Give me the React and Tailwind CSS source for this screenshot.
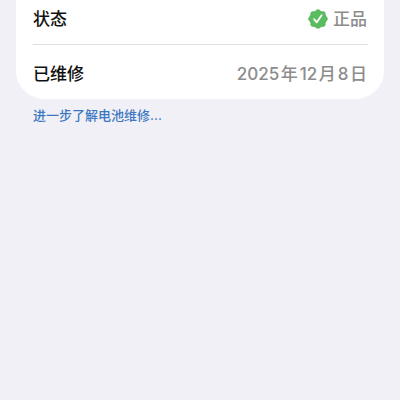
import { Fragment } from 'react'

const ROWS = [
  { label: '状态', value: ['正品'], verified: true },
  { label: '已维修', value: ['2025', '年', '12', '月', '8', '日'] },
]

// ── Green scalloped seal with a check mark ──────────────────────────────────
const VerifiedBadge = () => (
  <svg className="h-5 w-5" viewBox="0 0 20 20" fill="none">
    <g fill="#5bbb60">
      <circle cx="10" cy="10" r="8.7" />
      {[0, 45, 90, 135, 180, 225, 270, 315].map((angle) => (
        <circle key={angle} cx="10" cy="2.6" r="2.4" transform={`rotate(${angle} 10 10)`} />
      ))}
    </g>
    <path d="M6.2 10.3l2.6 3 4.8-7" stroke="#fff" strokeWidth="1.8" strokeLinecap="round" strokeLinejoin="round" />
  </svg>
)

const Row = ({ label, value, verified }) => (
  <div className="flex h-[54px] items-center justify-between pr-px pt-[3px]">
    <span className="text-[#101010]">{label}</span>
    <div className="flex items-center gap-[5px] text-[#8c8c8d]">
      {verified && <VerifiedBadge />}
      <span className="flex">
        {value.map((part, i) => (
          <span key={i} className={/\d/.test(part) ? 'pl-[2px] pr-[1.5px]' : ''}>{part}</span>
        ))}
      </span>
    </div>
  </div>
)

const App = () => (
  <main className="h-screen overflow-hidden bg-[#f1f0f6] px-4 font-['Inter','Noto_Sans_CJK_SC',sans-serif]">
    <section className="-mt-[10px] rounded-b-[28px] bg-white pl-[17px] pr-4 text-[17px] font-medium leading-6">
      {ROWS.map((row, i) => (
        <Fragment key={row.label}>
          {i > 0 && <hr className="border-t border-[#dfdfe1]" />}
          <Row {...row} />
        </Fragment>
      ))}
    </section>
    <a href="#" className="ml-[17px] mt-1.5 block text-[13px] font-medium leading-5 text-[#3c78c2]">进一步了解电池维修...</a>
  </main>
)

export default App
